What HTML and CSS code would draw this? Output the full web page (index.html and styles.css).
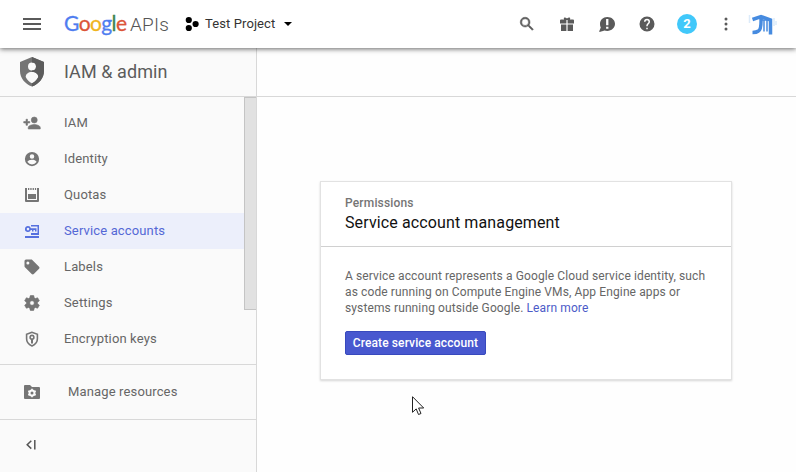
FILE: index.html
```html
<!DOCTYPE html>
<html lang="en">
<head>
<meta charset="utf-8">
<title>Service accounts - IAM &amp; admin</title>
<link rel="stylesheet" href="styles.css">
</head>
<body>
<header class="topbar">
  <svg class="menu" viewBox="0 0 24 24"><path d="M3 18h18v-2H3v2zm0-5h18v-2H3v2zm0-7v2h18V6H3z"/></svg>
  <div class="logo"><span class="google"><span class="b">G</span><span class="r">o</span><span class="y">o</span><span class="b">g</span><span class="g">l</span><span class="r">e</span></span><span class="apis">APIs</span></div>
  <div class="project">
    <svg class="project-icon" viewBox="0 0 14 16"><circle cx="3.8" cy="4" r="3.1"/><circle cx="3.8" cy="12" r="3.1"/><circle cx="10.6" cy="8" r="3.1"/></svg>
    <span class="project-name">Test Project</span>
    <svg class="caret" viewBox="0 0 8 4"><path d="M0 0h8L4 4z"/></svg>
  </div>
  <div class="tools">
    <svg class="i18" viewBox="0 0 24 24"><path d="M15.5 14h-.79l-.28-.27A6.47 6.47 0 0 0 16 9.5 6.5 6.5 0 1 0 9.5 16c1.61 0 3.09-.59 4.23-1.57l.27.28v.79l5 4.99L20.49 19l-4.99-5zm-6 0a4.5 4.5 0 1 1 0-9 4.5 4.5 0 0 1 0 9z" stroke="#5a5a5a" stroke-width=".7"/></svg>
    <svg class="i14" viewBox="0 0 14 14"><path d="M1 2.5h3.2C3 1 4.700-.4 7 1.500 9.300-.4 11 1 9.800 2.500H13a1 1 0 0 1 1 1V6.500H7.600V3h-1.200v3.500H0v-3a1 1 0 0 1 1-1zM1 7.500h5.400V14H1zM7.600 7.500H13V14H7.600z"/></svg>
    <svg class="i16" viewBox="0 0 16 16"><path d="M8.300 1C4 1 1 4 1 7.800c0 1.700.3 2.800.8 3.700L0 15.800c2.400-.1 3.900-.6 5.200-1.300 1 .3 2 .4 3.100.4 4.300 0 7.700-3.200 7.700-7.100S12.600 1 8.300 1zM7.100 3h2.300v6.300H7.100zM7.100 10.700h2.300v2.100H7.100z" fill-rule="evenodd"/></svg>
    <svg class="i18 help" viewBox="0 0 24 24"><path d="M12 2a10 10 0 1 0 0 20 10 10 0 0 0 0-20zm1 17h-2v-2h2v2zm2.070-7.750l-.9.920C13.450 12.900 13 13.500 13 15h-2v-.5c0-1.100.45-2.100 1.170-2.830l1.240-1.260c.37-.36.59-.86.59-1.410a2 2 0 1 0-4 0H8a4 4 0 1 1 8 0c0 .88-.36 1.680-.93 2.250z"/></svg>
    <span class="count">2</span>
    <svg class="more" viewBox="0 0 4 14"><circle cx="2" cy="2" r="1.500"/><circle cx="2" cy="7" r="1.500"/><circle cx="2" cy="12" r="1.500"/></svg>
    <svg class="avatar" viewBox="0 0 30 24"><path class="halo" d="M2.500 3v8M27 6v8M29 9v4"/><path class="mark" d="M5.500 7.500L14 4.500l9.500 3.500V22.500M14 4.500q.5 13-2.500 14.500-2 1.500-6 1.500"/><path class="mark thin" d="M14 8h8M17 8v11.500M20 8v11.500"/></svg>
  </div>
</header>
<div class="workspace">
  <aside class="sidebar">
    <div class="section-title">
      <svg class="shield" viewBox="0 0 24 30"><path fill-rule="evenodd" d="M12 0L0 5v9c0 7 5 13 12 15.500 7-2.500 12-8.500 12-15.500V5zM12 5.500a4 4 0 1 1 0 8 4 4 0 0 1 0-8zm0 9.500c3.800 0 6.300 2 6.300 5-1.400 3-3.600 5.100-6.300 6.200-2.700-1.100-4.900-3.200-6.300-6.200 0-3 2.500-5 6.300-5z"/><path d="M12 0v5.500a4 4 0 0 1 0 8V15c3.800 0 6.300 2 6.300 5-1.400 3-3.600 5.100-6.300 6.200v3.300c7-2.500 12-8.500 12-15.500V5z" fill="#5c5c5c"/></svg>
      <h1>IAM &amp; admin</h1>
    </div>
    <nav class="nav">
      <a class="item"><svg viewBox="0 0 24 24"><path d="M15 12a4 4 0 1 0 0-8 4 4 0 0 0 0 8zm-9-2V7H4v3H1v2h3v3h2v-3h3v-2H6zm9 4c-2.670 0-8 1.340-8 4v2h16v-2c0-2.660-5.330-4-8-4z" stroke="#757575" stroke-width=".8"/></svg><span>IAM</span></a>
      <a class="item"><svg viewBox="0 0 24 24"><path d="M12 2.500a9.500 9.500 0 1 0 0 19 9.500 9.500 0 0 0 0-19zm0 3a3 3 0 1 1 0 6 3 3 0 0 1 0-6zm0 13.700a7.200 7.200 0 0 1-6-3.220c.03-1.990 4-3.080 6-3.080s5.970 1.090 6 3.080a7.200 7.200 0 0 1-6 3.220z"/></svg><span>Identity</span></a>
      <a class="item"><svg viewBox="0 0 18 18"><path fill-rule="evenodd" d="M2 2h2v12h10V2h2v13a1 1 0 0 1-1 1H3a1 1 0 0 1-1-1zM5 8h8v5H5zM5 2h1.300v2H5zM7.300 2h1.300v2H7.300zM9.600 2h1.300v2H9.600zM11.900 2h1.200v2h-1.200z"/></svg><span>Quotas</span></a>
      <a class="item active"><svg viewBox="0 0 18 18"><path fill-rule="evenodd" d="M5 4a3 3 0 1 0 2.800 4H9v1.500h1.500V8H12v1.500h1.500V6.200H7.900A3 3 0 0 0 5 4zm0 1.800a1.300 1.300 0 1 1 0 2.600 1.300 1.300 0 0 1 0-2.600z"/><path d="M8 3h8v10H8v-2h6.500V4.500H8zM2 14h14v2H2z"/></svg><span>Service accounts</span></a>
      <a class="item"><svg viewBox="0 0 24 24"><path d="M21.410 11.580l-9-9C12.050 2.220 11.550 2 11 2H4a2 2 0 0 0-2 2v7c0 .55.22 1.050.59 1.420l9 9c.36.36.86.58 1.410.58s1.050-.22 1.410-.59l7-7c.37-.36.59-.86.59-1.410s-.23-1.060-.59-1.420zM6.500 8.500a2 2 0 1 1 0-4 2 2 0 0 1 0 4z"/></svg><span>Labels</span></a>
      <a class="item"><svg viewBox="0 0 24 24"><path d="M19.430 12.980c.04-.32.07-.64.07-.98s-.03-.66-.07-.98l2.110-1.650c.19-.15.24-.42.12-.64l-2-3.460c-.12-.22-.39-.3-.61-.22l-2.490 1c-.52-.4-1.080-.73-1.690-.98l-.38-2.650A.49.49 0 0 0 14 2h-4c-.25 0-.46.18-.49.42l-.38 2.650c-.61.25-1.170.59-1.690.98l-2.490-1c-.23-.09-.49 0-.61.220l-2 3.460c-.13.22-.07.49.12.64l2.110 1.650c-.04.32-.07.65-.07.98s.03.66.07.98l-2.110 1.650c-.19.15-.24.42-.12.64l2 3.460c.12.22.39.3.61.22l2.490-1c.52.4 1.080.73 1.690.98l.38 2.650c.03.24.24.42.49.42h4c.25 0 .46-.18.49-.42l.38-2.650c.61-.25 1.170-.59 1.690-.98l2.490 1c.23.09.49 0 .61-.22l2-3.460c.12-.22.07-.49-.12-.64l-2.110-1.650zM12 15a3 3 0 1 1 0-6 3 3 0 0 1 0 6z" stroke="#757575" stroke-width=".8"/></svg><span>Settings</span></a>
      <a class="item"><svg viewBox="0 0 18 18"><path d="M9 2.300L3.600 4.300v4.500c0 3.500 2.300 5.900 5.400 7.100 3.100-1.200 5.400-3.600 5.400-7.100V4.300z" fill="none" stroke="#757575" stroke-width="1.600"/><path fill-rule="evenodd" d="M9 4.500a2.800 2.800 0 0 0-1 5.400V13.500h2V9.900a2.800 2.800 0 0 0-1-5.400zm0 1.700a1.100 1.100 0 1 1 0 2.200 1.100 1.100 0 0 1 0-2.200z"/></svg><span>Encryption keys</span></a>
      <div class="scrollbar"></div>
    </nav>
    <a class="resources"><svg viewBox="0 0 16 14"><path d="M1 0h5l2 2h7a1 1 0 0 1 1 1v10a1 1 0 0 1-1 1H1a1 1 0 0 1-1-1V1a1 1 0 0 1 1-1z"/><circle cx="8" cy="8" r="2.500" fill="none" stroke="#fafafa" stroke-width="2"/><path d="M8 3.700v1.500M8 10.800v1.500M4.300 5.900l1.300.8M10.400 9.300l1.300.8M4.300 10.100l1.300-.8M10.400 6.700l1.300-.8" stroke="#fafafa" stroke-width="1.600"/></svg><span>Manage resources</span></a>
    <div class="collapse"><svg viewBox="0 0 10 10"><path d="M5.300.8L1.200 4.700l4.100 3.900M8.800 0v9.500" fill="none" stroke="#555" stroke-width="1.500"/></svg></div>
  </aside>
  <main class="content">
    <div class="content-bar"></div>
    <section class="card">
      <div class="card-head">
        <div class="eyebrow">Permissions</div>
        <h2>Service account management</h2>
      </div>
      <div class="card-body">
        <p>A service account represents a Google Cloud service identity, such<br>as code running on Compute Engine VMs, App Engine apps or<br>systems running outside Google. <a>Learn more</a></p>
        <button>Create service account</button>
      </div>
    </section>
  </main>
</div>
<svg class="cursor" viewBox="0 0 13 20"><path d="M.5.700v15.600l3.700-3.400 2.300 5.600 2.500-1-2.400-5.500h5.100z" fill="#fff" stroke="#222" stroke-width="1"/></svg>
</body>
</html>
```
FILE: styles.css
```css
* { box-sizing: border-box; }
body {
  margin: 0;
  width: 796px;
  height: 472px;
  overflow: hidden;
  display: flex;
  flex-direction: column;
  background: #fefefe;
  font: 13px/16px Roboto, sans-serif;
  color: #666;
}
svg { display: block; flex: none; fill: #757575; }
h1, h2, p { margin: 0; font-weight: 400; }

.topbar {
  position: relative;
  flex: none;
  height: 48px;
  display: flex;
  align-items: center;
  padding: 0 19px 0 20px;
  background: #fff;
  box-shadow: 0 1px 5px rgba(0, 0, 0, .6);
}
.menu { width: 24px; height: 24px; fill: #5a5a5a; }
.logo { display: flex; align-items: baseline; width: 140px; padding-left: 20px; line-height: 24px; }
.google { width: 66px; font-family: Lato, sans-serif; font-size: 21px; letter-spacing: -.6px; -webkit-text-stroke: .3px currentColor; }
.b { color: #4f7df0; }
.r { color: #dc5438; }
.y { color: #f0b51e; }
.g { color: #40854e; }
.apis { font-size: 19px; font-weight: 300; color: #555; letter-spacing: .2px; }
.project { display: flex; align-items: center; padding-left: 1px; }
.project-icon { width: 14px; height: 16px; fill: #000; }
.project-name { width: 79px; margin-left: 6px; color: #333; letter-spacing: .1px; white-space: nowrap; }
.caret { width: 8px; height: 4px; fill: #000; }
.tools { display: flex; align-items: center; margin-left: auto; }
.tools svg { fill: #5a5a5a; }
.i18 { width: 18px; height: 18px; }
.i14 { width: 14px; height: 14px; margin-left: 24px; }
.i16 { width: 16px; height: 16px; margin-left: 25px; }
.help { margin-left: 23px; }
.count {
  width: 20px;
  height: 20px;
  margin-left: 21px;
  border-radius: 50%;
  background: #41c8fa;
  color: #fff;
  font-weight: 700;
  line-height: 20px;
  text-align: center;
}
.more { width: 4px; height: 14px; margin-left: 27px; }
.avatar { width: 30px; height: 24px; margin-left: 19px; }
.avatar path { fill: none; stroke: #468be0; stroke-width: 3.5; }
.avatar .thin { stroke-width: 1.5; }
.avatar .halo { stroke: #dcebfa; stroke-width: 1.5; }

.workspace { flex: 1; display: flex; min-height: 0; }
.sidebar {
  width: 257px;
  display: flex;
  flex-direction: column;
  border-right: 1px solid #d8d8d8;
  background: #fafafa;
}
.section-title { height: 49px; display: flex; align-items: center; gap: 20px; padding-left: 20px; border-bottom: 1px solid #d8d8d8; }
.shield { width: 24px; height: 30px; }
h1 { font-size: 18px; line-height: 24px; color: #5c5c5c; letter-spacing: .07px; }
.nav { position: relative; height: 267px; padding-top: 8px; }
.item { display: flex; align-items: center; height: 36px; padding-left: 23px; letter-spacing: .14px; }
.item svg { width: 18px; height: 18px; }
.item span { margin-left: 23px; }
.active { background: #eceffb; color: #5468d6; }
.active svg { fill: #5670df; }
.scrollbar { position: absolute; top: 0; right: 0; width: 12px; height: 213px; background: #e1e1e1; border: 1px solid #c4c4c4; border-right: 0; }
.resources { display: flex; align-items: center; height: 56px; padding-left: 24px; border: solid #d8d8d8; border-width: 1px 0; letter-spacing: .14px; }
.resources svg { width: 16px; height: 14px; }
.resources span { margin-left: 28px; }
.collapse { padding: 20px 0 0 26px; }
.collapse svg { width: 10px; height: 10px; }

.content { flex: 1; }
.content-bar { height: 49px; border-bottom: 1px solid #d8d8d8; }
.card { width: 412px; height: 199px; margin: 84px 0 0 63px; background: #fff; border: 1px solid #e2e2e2; box-shadow: 0 1px 2px rgba(0, 0, 0, .16); }
.card-head { height: 65px; padding: 13px 24px 0; border-bottom: 1px solid #d0d0d0; }
.eyebrow { font-size: 12px; font-weight: 500; letter-spacing: .17px; color: #757575; }
h2 { margin-top: 2px; font-size: 16px; line-height: 20px; color: #111; letter-spacing: .12px; }
.card-body { padding: 21px 24px 0; }
.card-body p { font-size: 12px; letter-spacing: .115px; white-space: nowrap; }
.card-body a { color: #4c5bc8; }
button {
  display: block;
  width: 141px;
  height: 24px;
  margin-top: 15px;
  padding: 0;
  border: 1px solid #3849bd;
  border-radius: 2px;
  background: #4858cf;
  color: #fff;
  font: 500 12px/20px Roboto, sans-serif;
  letter-spacing: .1px;
}
.cursor { position: absolute; left: 412px; top: 396px; width: 13px; height: 20px; }
```
